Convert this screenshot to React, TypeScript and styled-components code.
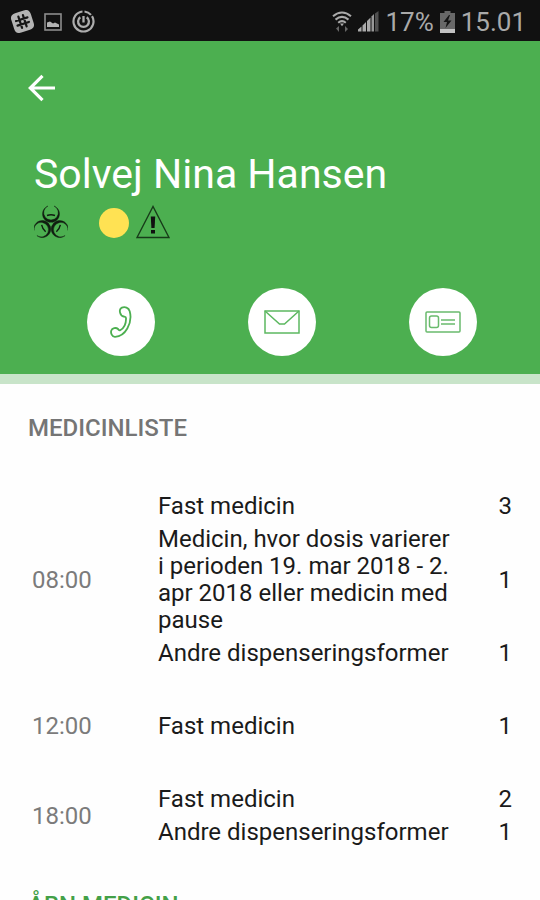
import React from "react";
import styled, { createGlobalStyle } from "styled-components";

const GlobalStyle = createGlobalStyle`
  * { box-sizing: border-box; }
  body {
    margin: 0;
    background: #fefefe;
    font-family: Roboto, "Liberation Sans", sans-serif;
  }
`;

const Screen = styled.div`
  display: flex;
  flex-direction: column;
  height: 100vh;
  overflow: hidden;
`;

const StatusBar = styled.div`
  display: flex;
  flex: none;
  align-items: center;
  justify-content: space-between;
  height: 41px;
  padding: 2px 14px 0 11px;
  background: #111111;
  color: #a9a9a9;
  font-size: 26px;
  line-height: 32px;
`;

const StatusGroup = styled.div<{ $gap: number }>`
  display: flex;
  align-items: center;
  gap: ${({ $gap }) => $gap}px;
`;

const Header = styled.header`
  flex: none;
  padding: 29px 28px 18px;
  background: #4caf50;
  border-bottom: 10px solid #c8e4c9;
`;

const BackButton = styled.button`
  display: flex;
  padding: 4px 0;
  border: 0;
  background: none;
  cursor: pointer;
`;

const PatientName = styled.h1`
  margin: 44px 0 0;
  padding-left: 6px;
  color: #ffffff;
  font-size: 41px;
  font-weight: 400;
  line-height: 48px;
`;

const Flags = styled.div`
  display: flex;
  align-items: center;
  margin-top: 6px;
  padding-left: 6px;
  height: 36px;
`;

const YellowDot = styled.span`
  width: 30px;
  height: 30px;
  margin: 2px 7px 0 31px;
  border-radius: 50%;
  background: #ffe253;
`;

const Actions = styled.nav`
  display: flex;
  justify-content: space-between;
  margin-top: 48px;
  padding: 0 35px 0 59px;
`;

const ActionButton = styled.button`
  display: flex;
  align-items: center;
  justify-content: center;
  width: 68px;
  height: 68px;
  padding: 0;
  border: 0;
  border-radius: 50%;
  background: #ffffff;
  cursor: pointer;
`;

const Content = styled.main`
  flex: 1;
  min-height: 0;
  overflow: hidden;
  padding: 30px 28px 0;
`;

const SectionTitle = styled.h2<{ $accent?: boolean }>`
  margin: 0;
  color: ${({ $accent }) => ($accent ? "#43a047" : "#757575")};
  font-size: 24px;
  font-weight: 500;
  line-height: 28px;
`;

const MedicineTable = styled.table`
  width: 100%;
  margin: 48px 0 42px;
  border-collapse: collapse;
  color: #1a1a1a;
  font-size: 24px;
  line-height: 27px;
`;

const TimeGroup = styled.tbody`
  & + &::before {
    content: "";
    display: block;
    height: 40px;
  }
`;

const TimeCell = styled.th`
  width: 130px;
  padding: 3px 4px;
  color: #7b7b7b;
  font-weight: 400;
  text-align: left;
`;

const NameCell = styled.td`
  padding: 3px 12px 3px 0;
`;

const CountCell = styled.td`
  width: 40px;
  padding: 3px 0;
  text-align: right;
`;

const BackIcon = () => (
  <svg width="27" height="28" viewBox="0 0 27 28" fill="none" stroke="#fff" strokeWidth="3.2">
    <path d="M14.5 1.8 2.3 14l12.2 12.2M2.5 14H27" />
  </svg>
);

const SlackIcon = () => (
  <svg width="23" height="23" viewBox="0 0 23 23">
    <g transform="rotate(-18 11.5 11.5)">
      <path
        d="M7 1.3h9Q21.7 1.3 21.7 7v9q0 5.7-5.7 5.7H7Q1.3 21.7 1.3 16V7Q1.3 1.3 7 1.3Z"
        fill="#b4b4b4"
      />
      <path
        d="M9.1 5.5v12M13.9 5.5v12M5.5 9.1h12M5.5 13.9h12"
        stroke="#161616"
        strokeWidth="2.2"
        strokeLinecap="round"
      />
    </g>
  </svg>
);

const PictureIcon = () => (
  <svg width="18" height="18" viewBox="0 0 18 18">
    <rect x="1" y="1" width="16" height="16" fill="none" stroke="#8d8d8d" strokeWidth="1.6" />
    <path d="M3 14V9.5l3-1 3 2 2-1 4 2V14Z" fill="#b4b4b4" />
  </svg>
);

const SyncIcon = () => (
  <svg width="23" height="23" viewBox="0 0 23 23" fill="none" stroke="#adadad">
    <path d="M12.5 1.5a10 10 0 0 1 6.5 3.4M20 6.2a10 10 0 1 1-9.5-4.7" strokeWidth="2.2" />
    <path d="M8.3 7.2a5.4 5.4 0 1 0 6.4 0" strokeWidth="2.3" />
    <path d="M11.5 6v6.5" strokeWidth="2.3" />
  </svg>
);

const WifiIcon = () => (
  <svg width="20" height="22" viewBox="0 0 20 22" fill="none" stroke="#aaa" strokeWidth="2.1">
    <path d="M1 5.2q9-7.4 18 0M3.5 8.6q6.5-5.4 13 0M6.2 11.8q3.8-3.2 7.6 0" />
    <path d="M8 12.5h4L10 15.3Z" fill="#aaa" stroke="none" />
    <path d="M7 15v6l-3-3.500ZM13 21v-6l3 3Z" fill="#666" stroke="none" />
  </svg>
);

const SignalIcon = () => (
  <svg width="21" height="21" viewBox="0 0 21 21">
    <path d="M0 20.5v-2l3.5-3v5ZM4.5 20.5v-6L8 11v9.5ZM9 20.5V10l3.5-3.5v14Z" fill="#aaa" />
    <path d="M13.5 20.5v-15L16 3v17.5Z" fill="#989898" />
    <path d="M17 20.5V2.5L20.5 0v20.5Z" fill="#505050" />
  </svg>
);

const BatteryIcon = () => (
  <svg width="15" height="22" viewBox="0 0 15 22">
    <path d="M4.5 0h6v2H15v20H0V2h4.5Z" fill="#686868" />
    <path d="M0 18h15v4H0Z" fill="#c2c2c2" />
    <path d="M9 4 3.5 11H7l-1.5 6L11.5 9.5H8L10 4Z" fill="#151515" />
  </svg>
);

const BiohazardIcon = () => (
  <svg width="34" height="34" viewBox="0 0 34 34">
    <g fill="#101c10">
      {[0, 120, 240].map((angle) => (
        <g key={angle} transform={`rotate(${angle} 17 19)`}>
          <path d="M14 1A8.5 8.5 0 1 0 20 1A7.3 7.3 0 1 1 14 1Z" stroke="#101c10" strokeWidth="0.4" />
          <path d="M13 10.5q4-1.4 8 0" fill="none" stroke="#101c10" strokeWidth="1.4" />
        </g>
      ))}
    </g>
    <circle cx="17" cy="19" r="1.5" fill="#4caf50" />
  </svg>
);

const WarningIcon = () => (
  <svg width="34" height="34" viewBox="0 0 34 34">
    <path d="M17 1.5 1 32.5h32Z" fill="none" stroke="#173b19" strokeWidth="1.4" />
    <path d="M14.8 11.5h4.4l-.6 11.5h-3.2Z" fill="#111" />
    <rect x="15" y="25" width="4" height="3.5" fill="#111" />
  </svg>
);

const PhoneIcon = () => (
  <svg width="22" height="32" viewBox="0 0 22 32" fill="none" stroke="#4caf50" strokeWidth="1.8">
    <path d="M11.3 1.9C15 .3 18.7 1.6 19.7 5.2c1.5 5.3.7 11.8-2.4 17.3-2.7 4.8-7.3 8-12.2 8.3C2 31 .4 27 1.3 24.5c.8-2.3 4.7-3.4 6.7-1.5.8.8 1.2 1.8 2.2 1.2 4.1-2.3 6-7 5.8-12.2 0-1.5-1.2-1.3-2.3-1.5-3.6-.6-5.2-6.8-2.4-8.6Z" />
  </svg>
);

const MailIcon = () => (
  <svg width="36" height="24" viewBox="0 0 36 24" fill="none" stroke="#5cb860" strokeWidth="1.5">
    <rect x="1" y="1" width="34" height="22" />
    <path d="m1 1 14.5 13h5L35 1" />
  </svg>
);

const CardIcon = () => (
  <svg width="36" height="22" viewBox="0 0 36 22" fill="none" stroke="#6abb6d" strokeWidth="1.5">
    <rect x="1" y="1" width="34" height="20" rx="1" />
    <rect x="4.5" y="5" width="9" height="11.5" rx="2" />
    <path d="M16 9h14M16 13h14" />
  </svg>
);

interface Medicine {
  name: string;
  count: number;
}

const schedule: { time: string; items: Medicine[] }[] = [
  {
    time: "08:00",
    items: [
      { name: "Fast medicin", count: 3 },
      {
        name: "Medicin, hvor dosis varierer i perioden 19. mar 2018 - 2. apr 2018 eller medicin med pause",
        count: 1,
      },
      { name: "Andre dispenseringsformer", count: 1 },
    ],
  },
  { time: "12:00", items: [{ name: "Fast medicin", count: 1 }] },
  {
    time: "18:00",
    items: [
      { name: "Fast medicin", count: 2 },
      { name: "Andre dispenseringsformer", count: 1 },
    ],
  },
];

export default function App() {
  return (
    <>
      <GlobalStyle />
      <Screen>
        <StatusBar>
          <StatusGroup $gap={10}>
            <SlackIcon />
            <PictureIcon />
            <SyncIcon />
          </StatusGroup>
          <StatusGroup $gap={6}>
            <WifiIcon />
            <SignalIcon />
            <span>17%</span>
            <BatteryIcon />
            <span>15.01</span>
          </StatusGroup>
        </StatusBar>
        <Header>
          <BackButton aria-label="Tilbage">
            <BackIcon />
          </BackButton>
          <PatientName>Solvej Nina Hansen</PatientName>
          <Flags>
            <BiohazardIcon />
            <YellowDot />
            <WarningIcon />
          </Flags>
          <Actions>
            <ActionButton aria-label="Ring op">
              <PhoneIcon />
            </ActionButton>
            <ActionButton aria-label="Send besked">
              <MailIcon />
            </ActionButton>
            <ActionButton aria-label="Stamkort">
              <CardIcon />
            </ActionButton>
          </Actions>
        </Header>
        <Content>
          <SectionTitle>MEDICINLISTE</SectionTitle>
          <MedicineTable>
            {schedule.map(({ time, items }) => (
              <TimeGroup key={time}>
                {items.map((item, index) => (
                  <tr key={item.name}>
                    {index === 0 && (
                      <TimeCell scope="rowgroup" rowSpan={items.length}>
                        {time}
                      </TimeCell>
                    )}
                    <NameCell>{item.name}</NameCell>
                    <CountCell>{item.count}</CountCell>
                  </tr>
                ))}
              </TimeGroup>
            ))}
          </MedicineTable>
          <SectionTitle $accent>ÅBN MEDICIN</SectionTitle>
        </Content>
      </Screen>
    </>
  );
}
